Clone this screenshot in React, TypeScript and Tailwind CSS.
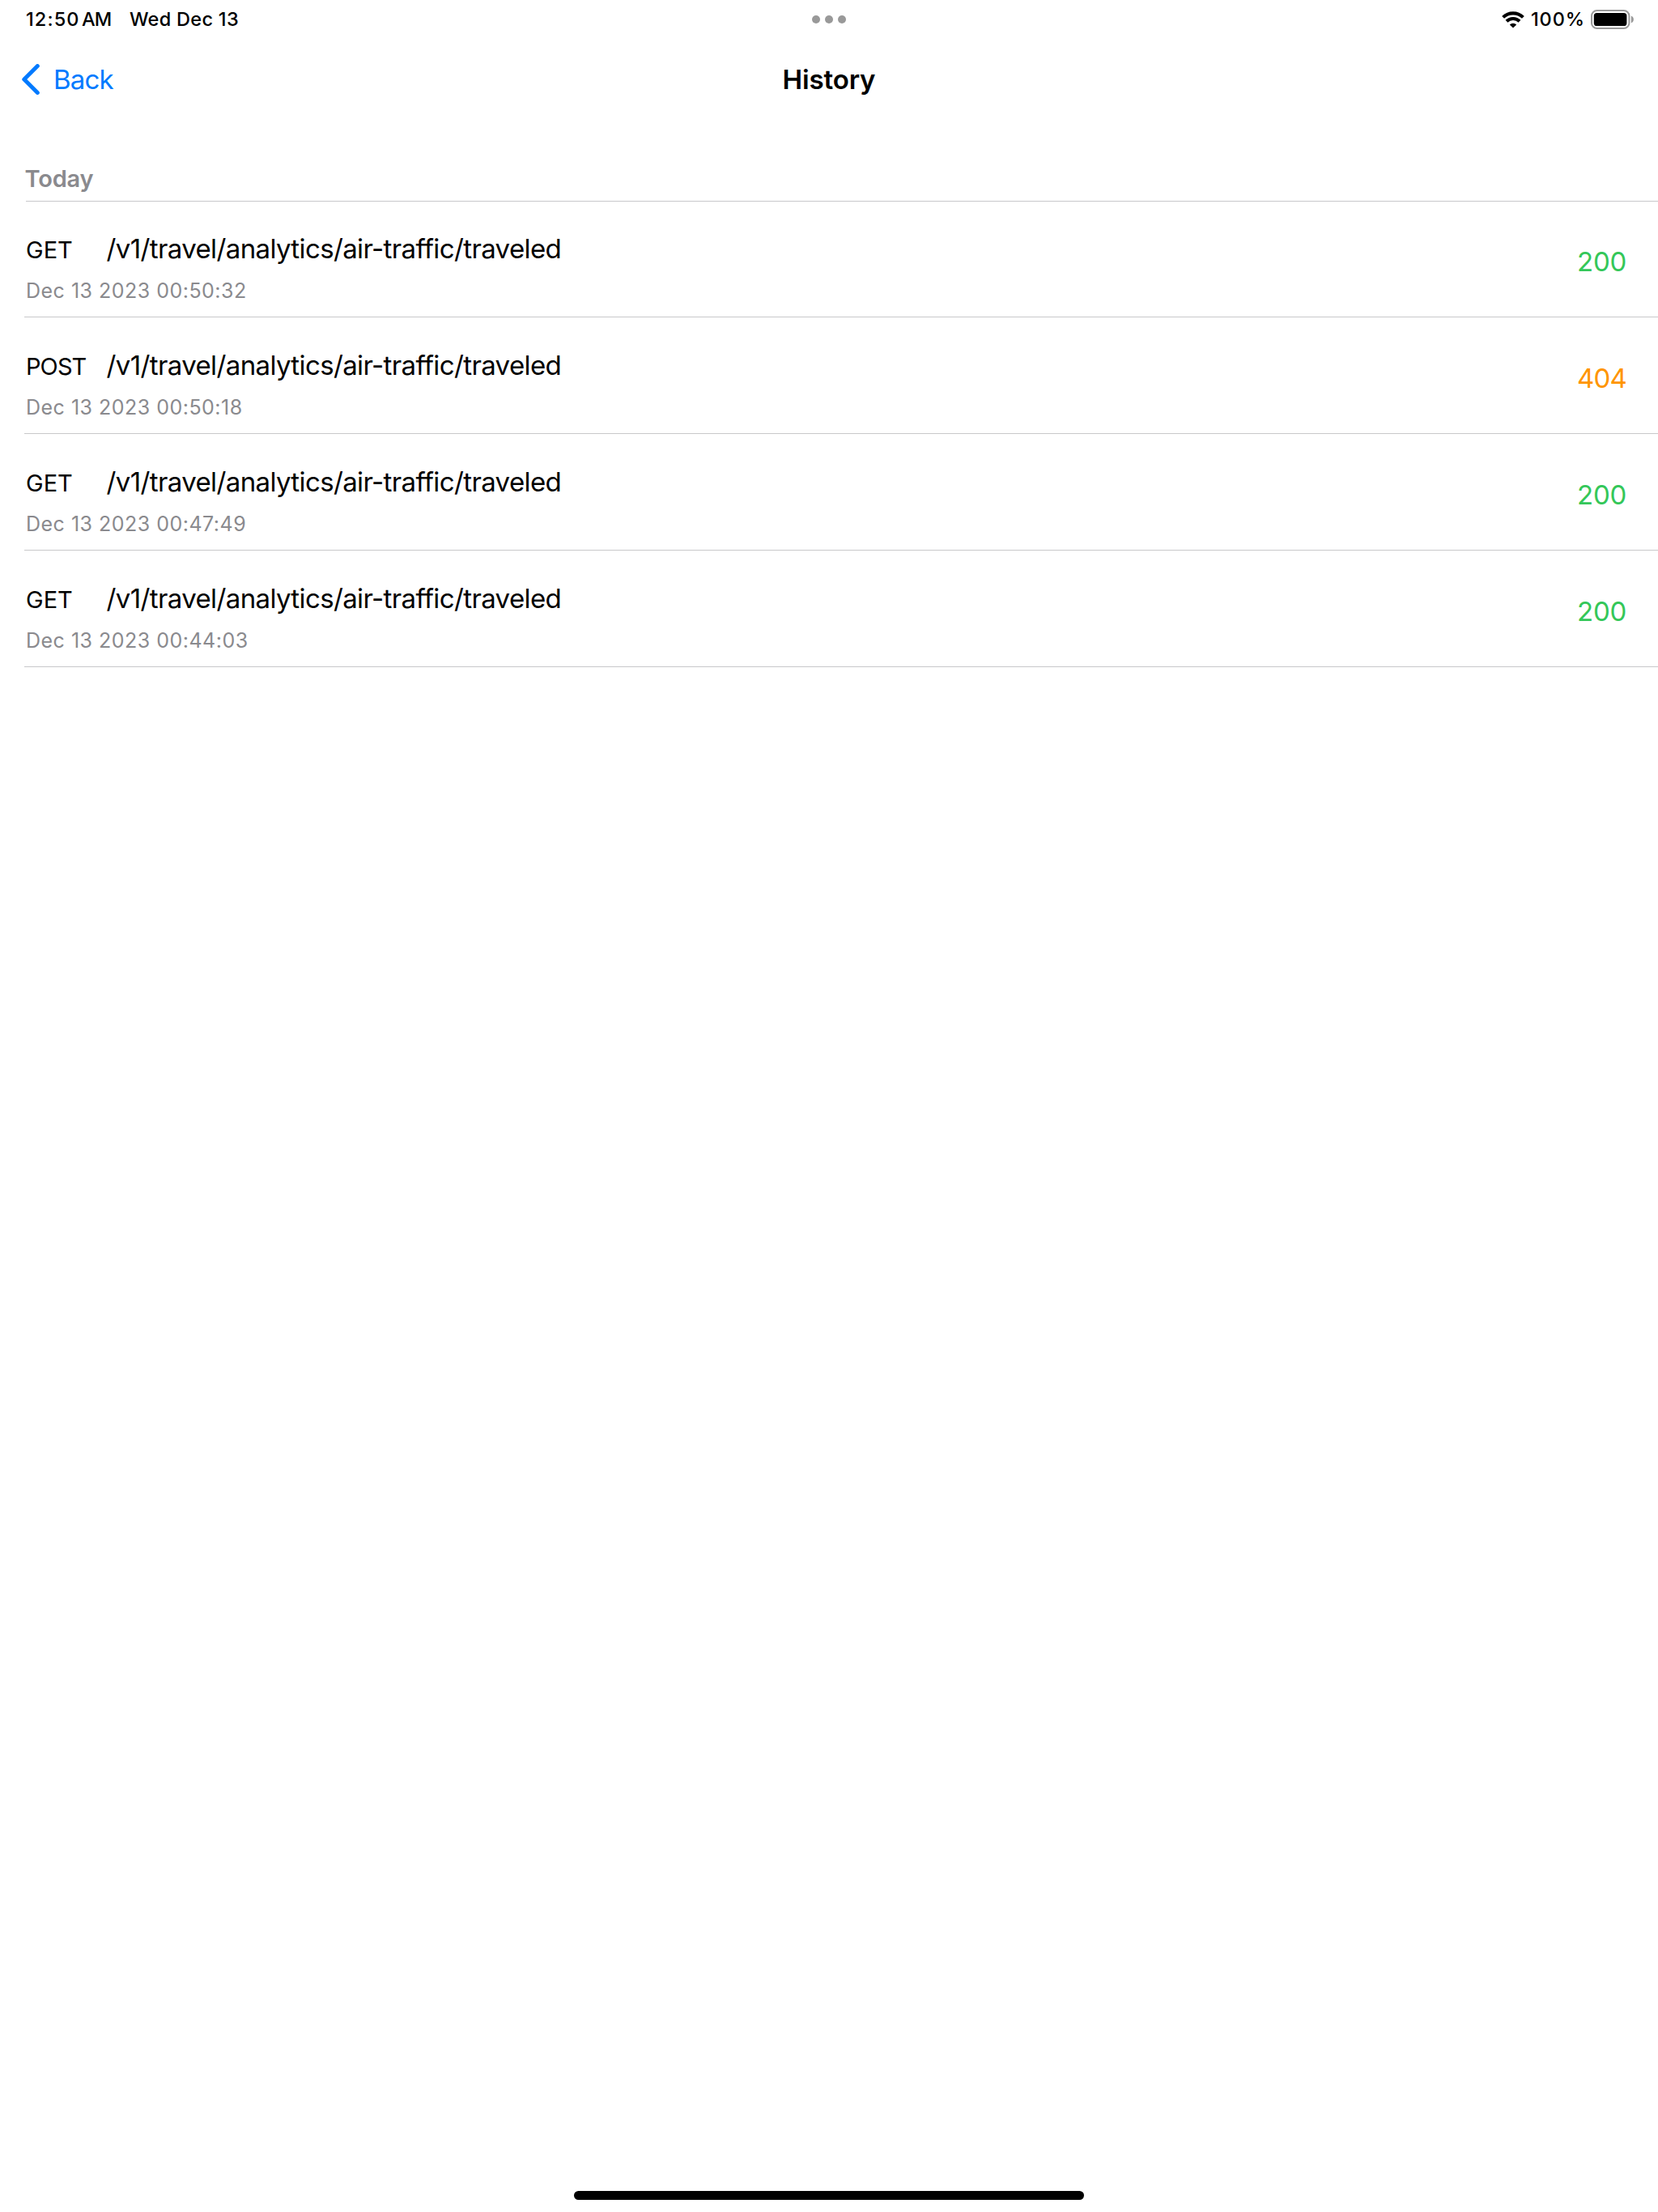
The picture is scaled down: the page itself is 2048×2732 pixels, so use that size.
type Entry = { method: 'GET' | 'POST'; path: string; date: string; status: number };

const entries: Entry[] = [
  { method: 'GET', path: '/v1/travel/analytics/air-traffic/traveled', date: 'Dec 13 2023 00:50:32', status: 200 },
  { method: 'POST', path: '/v1/travel/analytics/air-traffic/traveled', date: 'Dec 13 2023 00:50:18', status: 404 },
  { method: 'GET', path: '/v1/travel/analytics/air-traffic/traveled', date: 'Dec 13 2023 00:47:49', status: 200 },
  { method: 'GET', path: '/v1/travel/analytics/air-traffic/traveled', date: 'Dec 13 2023 00:44:03', status: 200 },
];

function WifiIcon() {
  return (
    <svg width="28" height="21" viewBox="0 0 28 21" fill="none" stroke="black" strokeWidth="4.1">
      <path d="M1.6 7.4a17.7 17.7 0 0 1 24.8 0" />
      <path d="M6 12.2a11.5 11.5 0 0 1 16 0" />
      <path d="M14 20.6l-4.2-4.2a6 6 0 0 1 8.4 0z" fill="black" stroke="none" />
    </svg>
  );
}

function BatteryIcon() {
  return (
    <svg width="54" height="24" viewBox="0 0 54 24">
      <rect x="1" y="1" width="46.4" height="22" rx="6.6" fill="none" stroke="#9a9a9a" strokeWidth="2" />
      <rect x="3.8" y="4" width="40.6" height="16" rx="3.6" fill="black" />
      <path d="M49.8 7.6v8.8c1.9-.7 3.1-2.4 3.1-4.4s-1.2-3.7-3.1-4.4z" fill="#9a9a9a" />
    </svg>
  );
}

function StatusBar() {
  return (
    <div className="grid h-12 grid-cols-[1fr_auto_1fr] items-center px-8 text-[23.5px] leading-[47px] font-medium">
      <div className="flex h-12 items-start">
        <span className="tracking-[1.1px]">12:50</span>
        <span className="ml-[2.5px] tracking-[-0.9px]">AM</span>
        <span className="ml-[22.5px] tracking-[0.3px]">Wed Dec 13</span>
      </div>
      <div className="flex gap-1.5">
        <span className="size-2.5 rounded-full bg-[#999]" />
        <span className="size-2.5 rounded-full bg-[#999]" />
        <span className="size-2.5 rounded-full bg-[#999]" />
      </div>
      <div className="-mr-[3px] flex h-12 items-center justify-end">
        <WifiIcon />
        <span className="mr-[7px] ml-2 h-12 tracking-[0.9px]">100%</span>
        <BatteryIcon />
      </div>
    </div>
  );
}

function NavBar() {
  return (
    <div className="grid h-25 grid-cols-[1fr_auto_1fr] items-center px-[26.5px] text-[33px] leading-10">
      <button className="flex items-center text-[#007aff]">
        <svg width="22" height="38" viewBox="0 0 22 38" fill="none" stroke="currentColor" strokeWidth="5" strokeLinecap="round" strokeLinejoin="round">
          <path d="M19.3 2.6L2.8 19l16.5 16.4" />
        </svg>
        <span className="ml-[17.5px] tracking-[-0.8px]">Back</span>
      </button>
      <h1 className="font-semibold tracking-[-0.15px]">History</h1>
    </div>
  );
}

function Row({ entry }: { entry: Entry }) {
  return (
    <li className="ml-[30px] flex h-36 items-center justify-between border-b border-[#c8c8ca] pr-[38px]">
      <div className="pt-[23px] pl-0.5">
        <div className="flex items-baseline leading-[42px]">
          <span className={entry.method === 'POST' ? 'w-[99.5px] text-[29px] tracking-[-0.9px]' : 'w-[99.5px] text-[29px]'}>
            {entry.method}
          </span>
          <span className="text-[33px] tracking-[-0.62px]">{entry.path}</span>
        </div>
        <p className="mt-3 text-[25px] leading-[34px] tracking-[0.49px] text-[#8a8a8e]">{entry.date}</p>
      </div>
      <span
        className={
          entry.status === 200
            ? 'w-[62px] pt-1.5 text-[33px] leading-10 tracking-[-0.2px] text-[#34c759]'
            : 'w-[62px] pt-1.5 text-[33px] leading-10 tracking-[-0.8px] text-[#ff9500]'
        }
      >
        {entry.status}
      </span>
    </li>
  );
}

export default function App() {
  return (
    <div className="flex h-[2732px] w-[2048px] flex-col bg-white font-['Inter',sans-serif] text-black">
      <StatusBar />
      <NavBar />
      <main className="flex-1">
        <h2 className="ml-8 flex h-[101px] items-end border-b border-[#c8c8ca] pb-[7px] text-[29px] leading-10 font-semibold tracking-[-0.2px] text-[#8a8a8e]">
          <span className="-ml-[1.5px]">Today</span>
        </h2>
        <ul className="-mt-px">
          {entries.map((entry) => (
            <Row key={entry.date} entry={entry} />
          ))}
        </ul>
      </main>
      <div className="mb-[15px] h-[11px] w-[630px] self-center rounded-full bg-black" />
    </div>
  );
}
